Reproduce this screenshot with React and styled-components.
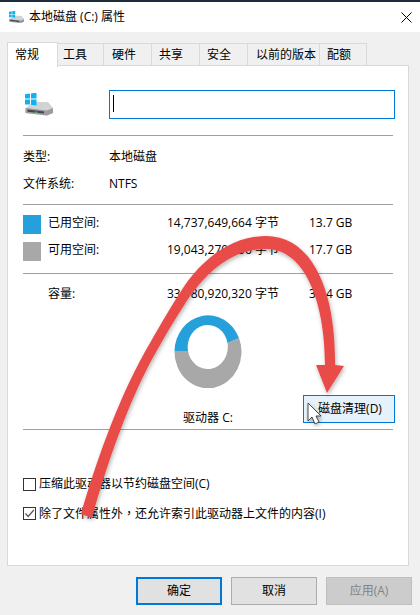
import React from "react";
import styled, { createGlobalStyle } from "styled-components";

const GlobalStyle = createGlobalStyle`
html, body {
  margin: 0;
  padding: 0;
  background: #f0f0f0;
}
* {
  box-sizing: border-box;
}
`;

const Win = styled.div`
position: relative;
width: 420px;
height: 615px;
overflow: hidden;
display: flex;
flex-direction: column;
background: #f0f0f0;
color: #000;
font-family: "Open Sans", "Noto Sans CJK SC", sans-serif;
font-size: 12px;
line-height: 16px;
`;

const TitleBar = styled.div`
height: 32px;
flex: none;
display: flex;
align-items: center;
gap: 5px;
padding: 0 9px;
background: #fff;
border-top: 2px solid #1d2b3a;
`;

const TitleText = styled.div`
flex: 1;
`;

const Close = styled.svg`
width: 11px;
height: 11px;
margin-right: -1px;
`;

const Body = styled.div`
flex: 1;
display: flex;
flex-direction: column;
padding: 10px 11px 10px 7px;
`;

const TabRow = styled.div`
display: flex;
align-items: flex-end;
height: 24px;
margin-bottom: -1px;
position: relative;
z-index: 1;
`;

const Tab = styled.div`
width: ${p => p.w}px;
height: ${p => (p.active ? 25 : 23)}px;
margin-bottom: ${p => (p.active ? -1 : 0)}px;
display: flex;
align-items: center;
padding-left: ${p => p.pad}px;
background: ${p => (p.active ? "#fff" : "#f0f0f0")};
border: 1px solid #d9d9d9;
border-left-width: ${p => (p.active ? 1 : 0)}px;
border-bottom-width: ${p => (p.active ? 0 : 1)}px;
`;

const Panel = styled.div`
width: 402px;
height: 501px;
flex: none;
display: flex;
flex-direction: column;
padding: 24px 15px 0;
background: #fff;
border: 1px solid #d9d9d9;
`;

const NameRow = styled.div`
display: flex;
align-items: center;
height: 29px;
margin-right: -2px;
`;

const IconCell = styled.div`
width: 86px;
padding-left: 2px;
display: flex;
`;

const NameField = styled.div`
flex: 1;
height: 29px;
display: flex;
align-items: center;
padding-left: 3px;
border: 1px solid #0078d7;
`;

const Caret = styled.div`
width: 1px;
height: 17px;
margin-bottom: 3px;
background: #000;
`;

const Divider = styled.div`
height: 1px;
flex: none;
background: #a0a0a0;
margin-top: ${p => p.top}px;
`;

const InfoRow = styled.div`
display: grid;
grid-template-columns: 86px 1fr;
height: 16px;
margin-top: ${p => p.top}px;
`;

const SpaceRow = styled.div`
display: grid;
grid-template-columns: 25px 119px 142px 1fr;
align-items: center;
height: 19px;
margin-top: ${p => p.top}px;
`;

const SpaceCell = styled.div`
margin-bottom: 3px;
`;

const Swatch = styled.div`
width: 18px;
height: 19px;
background: ${p => p.color};
`;

const ChartArea = styled.div`
display: grid;
grid-template-columns: 1fr auto 1fr;
height: 116px;
margin-top: 6px;
`;

const ChartCol = styled.div`
display: flex;
flex-direction: column;
align-items: center;
padding-top: 3px;
`;

const Donut = styled.svg`
width: 68px;
height: 74px;
flex: none;
`;

const DriveName = styled.div`
margin-top: 22px;
`;

const CleanCell = styled.div`
display: flex;
justify-content: flex-end;
align-items: flex-start;
padding-top: 84px;
margin-right: -2px;
`;

const CleanButton = styled.div`
width: 92px;
height: 28px;
display: flex;
align-items: center;
justify-content: center;
padding-left: 2px;
background: #e5f1fb;
border: 1px solid #0078d7;
`;

const CheckRow = styled.div`
display: flex;
align-items: center;
gap: 3px;
height: 14px;
margin-top: ${p => p.top}px;
`;

const Box = styled.div`
width: 13px;
height: 13px;
flex: none;
display: flex;
background: #fff;
border: 1px solid #333;
`;

const Comma = styled.span`
font-family: "Noto Sans CJK TC", sans-serif;
`;

const Buttons = styled.div`
display: flex;
justify-content: flex-end;
gap: 9px;
margin-top: 11px;
margin-right: -3px;
`;

const Btn = styled.div`
width: ${p => p.w}px;
height: 28px;
display: flex;
align-items: center;
justify-content: center;
background: ${p => (p.disabled ? "#cccccc" : "#e1e1e1")};
color: ${p => (p.disabled ? "#838383" : "#000")};
border: ${p => (p.primary ? "2px solid #0078d7" : `1px solid ${p.disabled ? "#bfbfbf" : "#adadad"}`)};
`;

const ArrowLayer = styled.svg`
position: absolute;
left: 0;
top: 0;
width: 420px;
height: 615px;
pointer-events: none;
z-index: 2;
`;

function DriveIcon({ size }) {
  return (
    <svg width={size} height={size * 0.8} viewBox="0 0 28 22.4">
      <path d="M13 9 H23 L28 15 V20 L22 22.4 L0.5 20 V15 L6 11Z" fill="#d2d3d5" />
      <path d="M0.5 15 L22 17.5 L28 15 V20 L22 22.4 L0.5 20Z" fill="#9a9c9f" />
      <path d="M2.5 16.5 L19 18.4 V20.6 L2.5 18.8Z" fill="#45484b" />
      <rect x="10" y="18.6" width="2.4" height="1.4" fill="#35c04a" />
      <path d="M0 1.2 L5 0.5 V5.6 H0Z M6 0.4 L11.5 -0.4 V5.6 H6Z M0 6.6 H5 V11.6 H0Z M6 6.6 H11.5 V12.4 L6 11.8Z" fill="#0fb2ef" />
    </svg>
  );
}

const tabs = [
  ["常规", 51, 7],
  ["工具", 46, 5],
  ["硬件", 48, 8],
  ["共享", 48, 7],
  ["安全", 48, 7],
  ["以前的版本", 72, 8],
  ["配额", 47, 7],
];

export default function App() {
  return (
    <Win>
      <GlobalStyle />
      <TitleBar>
        <DriveIcon size={15} />
        <TitleText>本地磁盘 (C:) 属性</TitleText>
        <Close viewBox="0 0 11 11">
          <path d="M0.5 0.5 L10.5 10.5 M10.5 0.5 L0.5 10.5" stroke="#000" strokeWidth="1" fill="none" />
        </Close>
      </TitleBar>
      <Body>
        <TabRow>
          {tabs.map(([label, w, pad], i) => (
            <Tab key={label} w={w} pad={pad} active={i === 0}>{label}</Tab>
          ))}
        </TabRow>
        <Panel>
          <NameRow>
            <IconCell><DriveIcon size={28} /></IconCell>
            <NameField><Caret /></NameField>
          </NameRow>
          <Divider top={16} />
          <InfoRow top={13}>
            <div>类型:</div>
            <div>本地磁盘</div>
          </InfoRow>
          <InfoRow top={11}>
            <div>文件系统:</div>
            <div>NTFS</div>
          </InfoRow>
          <Divider top={12} />
          <SpaceRow top={10}>
            <Swatch color="#26a0da" />
            <SpaceCell>已用空间:</SpaceCell>
            <SpaceCell>14,737,649,664 字节</SpaceCell>
            <SpaceCell>13.7 GB</SpaceCell>
          </SpaceRow>
          <SpaceRow top={8}>
            <Swatch color="#a8a8a8" />
            <SpaceCell>可用空间:</SpaceCell>
            <SpaceCell>19,043,270,656 字节</SpaceCell>
            <SpaceCell>17.7 GB</SpaceCell>
          </SpaceRow>
          <Divider top={12} />
          <SpaceRow top={12}>
            <div />
            <SpaceCell>容量:</SpaceCell>
            <SpaceCell>33,780,920,320 字节</SpaceCell>
            <SpaceCell>31.4 GB</SpaceCell>
          </SpaceRow>
          <ChartArea>
            <div />
            <ChartCol>
              <Donut viewBox="0 0 68 74">
                <path d="M0.5 37 A33.5 36.5 0 1 0 65 24 L53.5 29 A20 22 0 1 1 14 37Z" fill="#a8a8a8" />
                <path d="M0.5 37 A33.5 36.5 0 0 1 65 24 L53.5 29 A20 22 0 0 0 14 37Z" fill="#26a0da" />
              </Donut>
              <DriveName>驱动器 C:</DriveName>
            </ChartCol>
            <CleanCell>
              <CleanButton>磁盘清理(D)</CleanButton>
            </CleanCell>
          </ChartArea>
          <Divider top={2} />
          <CheckRow top={47}>
            <Box />
            <div>压缩此驱动器以节约磁盘空间(C)</div>
          </CheckRow>
          <CheckRow top={15}>
            <Box>
              <svg viewBox="0 0 11 11">
                <path d="M1.5 5.5 L4.2 8.5 L9.8 2" stroke="#555" strokeWidth="1.2" fill="none" />
              </svg>
            </Box>
            <div>除了文件属性外<Comma>，</Comma>还允许索引此驱动器上文件的内容(I)</div>
          </CheckRow>
        </Panel>
        <Buttons>
          <Btn w={86} primary>确定</Btn>
          <Btn w={86}>取消</Btn>
          <Btn w={86} disabled>应用(A)</Btn>
        </Buttons>
      </Body>
      {/* red annotation arrow drawn over the dialog */}
      <ArrowLayer viewBox="0 0 420 615">
        <defs>
          <filter id="soft" x="-10%" y="-10%" width="120%" height="120%">
            <feDropShadow dx="1" dy="2" stdDeviation="2" floodColor="#000" floodOpacity="0.3" />
          </filter>
        </defs>
        <g filter="url(#soft)" fill="#e94c4a">
          <path d="M81 514 C98 455 122 390 150 343 C162 322 172 305 183 288 C205 255 235 236 266 236 C312 236 336 290 335 365 L344 366 L327 393 L316 365 L325 365 C325 302 305 249 266 249 C232 249 205 272 183 307 C170 327 160 345 150 363 C128 405 108 460 92 518Z" />
        </g>
        <path d="M308 403 V421 L312 417 L315 424 L319 422 L316 416 L321 416Z" fill="#fff" stroke="#222" strokeWidth="0.8" filter="url(#soft)" />
      </ArrowLayer>
    </Win>
  );
}
